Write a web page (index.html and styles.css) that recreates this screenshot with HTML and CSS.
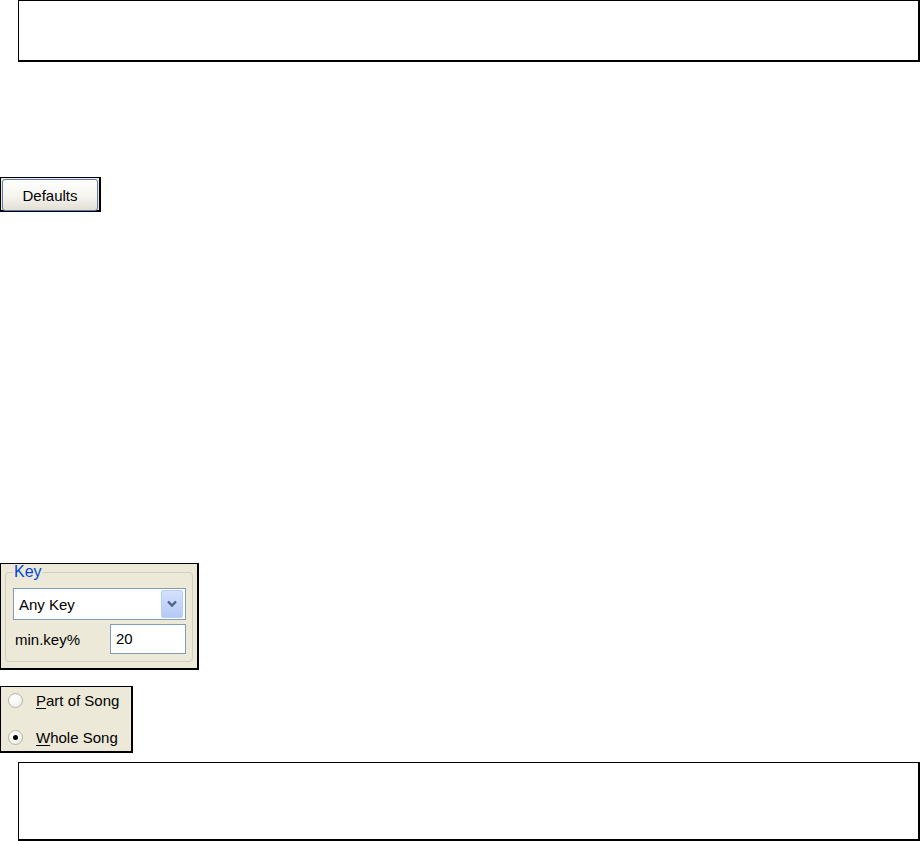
FILE: index.html
```html
<!DOCTYPE html>
<html lang="en">
  <head>
    <meta charset="UTF-8">
    <meta name="viewport" content="width=device-width, initial-scale=1.0">
    <title>Key Options</title>
    <link rel="stylesheet" href="styles.css">
  </head>
  <body>
    <div class="note-box"></div>

    <button class="defaults-button"><span class="defaults-face">Defaults</span></button>

    <div class="key-panel">
      <fieldset class="key-group">
        <legend class="key-legend">Key</legend>
        <div class="key-select">
          <span class="key-select-text">Any Key</span>
          <span class="key-select-arrow">
            <svg width="12" height="8" viewBox="0 0 12 8"><path d="M2 1.5 L6 5.5 L10 1.5" fill="none" stroke="#4d6185" stroke-width="2.4"/></svg>
          </span>
        </div>
        <div class="key-row">
          <span class="key-label">min.key%</span>
          <span class="key-input">20</span>
        </div>
      </fieldset>
    </div>

    <div class="radio-panel">
      <div class="radio-row">
        <span class="radio"></span>
        <span class="radio-label"><u>P</u>art of Song</span>
      </div>
      <div class="radio-row">
        <span class="radio radio-checked"></span>
        <span class="radio-label"><u>W</u>hole Song</span>
      </div>
    </div>

    <div class="note-box note-box-bottom"></div>
  </body>
</html>
```

FILE: styles.css
```css
body {
    margin: 0;
    background-color: white;
    font-family: "Liberation Sans", Arial, sans-serif;
    font-size: 15px;
    color: black;
}

.note-box {
    width: 899px;
    height: 59px;
    margin-left: 18px;
    border: 1px solid black;
    border-right-width: 2px;
    border-bottom-width: 2px;
}

.note-box-bottom {
    height: 76px;
    margin-top: 9px;
}

.defaults-button {
    display: block;
    margin-top: 115px;
    width: 101px;
    height: 35px;
    padding: 1px;
    border: 1px solid black;
    border-right-width: 2px;
    border-bottom-width: 2px;
    background-color: #ece9d8;
}

.defaults-face {
    display: flex;
    align-items: center;
    justify-content: center;
    height: 100%;
    border: 1px solid #5d7cb4;
    border-radius: 3px;
    background: linear-gradient(#ffffff, #f5f4ef 55%, #e2dfd4);
    font-family: "Liberation Sans", Arial, sans-serif;
    font-size: 15px;
    color: black;
}

.key-panel {
    width: 196px;
    height: 104px;
    margin-top: 351px;
    border: 1px solid black;
    border-right-width: 2px;
    border-bottom-width: 2px;
    background-color: #ece9d8;
}

.key-group {
    margin: 0 4px 0 4px;
    padding: 0 8px 0 7px;
    height: 96px;
    border: 1px solid #d0d0bf;
    border-radius: 4px;
}

.key-legend {
    padding: 0 1px;
    margin-left: 0;
    color: #0046d5;
    font-size: 16px;
    line-height: 16px;
}

.key-select {
    display: flex;
    align-items: center;
    justify-content: space-between;
    height: 30px;
    margin-top: 8px;
    margin-right: -2px;
    border: 1px solid #7f9db9;
    background-color: white;
}

.key-select-text {
    padding-left: 5px;
}

.key-select-arrow {
    display: flex;
    align-items: center;
    justify-content: center;
    width: 20px;
    height: 26px;
    margin-right: 2px;
    border: 1px solid #b9cdf6;
    border-radius: 2px;
    background: linear-gradient(#d4e0fc, #b6caf6);
}

.key-row {
    display: flex;
    align-items: center;
    justify-content: space-between;
    margin-top: 4px;
    margin-right: -2px;
}

.key-label {
    padding-left: 2px;
}

.key-input {
    width: 69px;
    height: 28px;
    line-height: 28px;
    padding-left: 5px;
    border: 1px solid #7f9db9;
    background-color: white;
}

.radio-panel {
    width: 130px;
    height: 64px;
    margin-top: 16px;
    border: 1px solid black;
    border-right-width: 2px;
    border-bottom-width: 2px;
    background-color: #ece9d8;
}

.radio-row {
    display: flex;
    align-items: center;
    height: 26px;
    padding-left: 7px;
}

.radio-row + .radio-row {
    margin-top: 11px;
}

.radio {
    position: relative;
    width: 13px;
    height: 13px;
    margin-right: 13px;
    border: 1px solid #b4b4a8;
    border-radius: 50%;
    background: radial-gradient(circle at 35% 35%, #ffffff, #f6f5f1 60%, #e0ded5);
}

.radio-checked::after {
    content: "";
    position: absolute;
    left: 4px;
    top: 4px;
    width: 5px;
    height: 5px;
    border-radius: 50%;
    background-color: black;
}

.radio-label u {
    text-underline-offset: 2px;
}
```
